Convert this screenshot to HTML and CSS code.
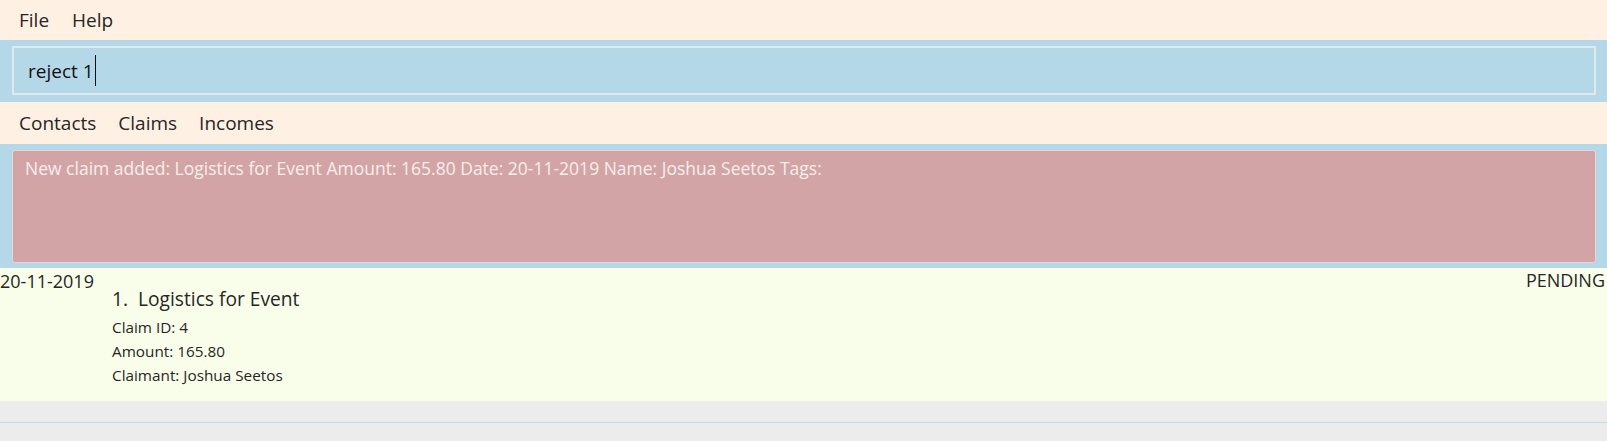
FILE: index.html
```html
<!DOCTYPE html>
<html>
<head>
<meta charset="utf-8">
<link rel="stylesheet" href="styles.css">
</head>
<body>
<div class="app">
  <div class="menubar">
    <span class="menu-item">File</span>
    <span class="menu-item">Help</span>
  </div>
  <div class="command-area">
    <div class="command-field"><span class="command-text">reject 1</span><span class="caret"></span></div>
  </div>
  <div class="tabbar">
    <span class="tab">Contacts</span>
    <span class="tab">Claims</span>
    <span class="tab">Incomes</span>
  </div>
  <div class="result-area">
    <div class="result-box">New claim added: Logistics for Event Amount: 165.80 Date: 20-11-2019 Name: Joshua Seetos Tags:</div>
  </div>
  <div class="list">
    <div class="card">
      <div class="card-date">20-11-2019</div>
      <div class="card-body">
        <div class="card-title">1.&nbsp;&nbsp;Logistics for Event</div>
        <div class="card-line">Claim ID: 4</div>
        <div class="card-line">Amount: 165.80</div>
        <div class="card-line">Claimant: Joshua Seetos</div>
      </div>
      <div class="card-status">PENDING</div>
    </div>
  </div>
  <div class="footer">
    <div class="footer-line"></div>
  </div>
</div>
</body>
</html>
```
FILE: styles.css
```css
html, body {
  margin: 0;
  padding: 0;
}
body {
  width: 1607px;
  height: 441px;
  overflow: hidden;
  background: #ececec;
  font-family: "Open Sans", "Noto Sans", sans-serif;
  color: #262626;
}
.app {
  display: flex;
  flex-direction: column;
}
.menubar {
  height: 40px;
  background: #fef0e3;
  display: flex;
  align-items: center;
  padding-left: 19px;
  gap: 23px;
  font-size: 19px;
  box-sizing: border-box;
}
.menu-item {
  line-height: 40px;
}
.command-area {
  height: 62px;
  background: #b4d8e7;
  padding: 6px 11px 7px 12px;
  box-sizing: border-box;
}
.command-field {
  height: 49px;
  border: 2px solid #dfe9ee;
  box-sizing: border-box;
  display: flex;
  align-items: center;
  padding-left: 14px;
  font-size: 19px;
  color: #111;
}
.caret {
  display: inline-block;
  width: 1.5px;
  height: 31px;
  background: #111;
  margin-left: 1px;
}
.tabbar {
  height: 42px;
  background: #fef0e3;
  display: flex;
  align-items: center;
  padding-left: 19px;
  gap: 22px;
  font-size: 19px;
  box-sizing: border-box;
}
.result-area {
  height: 124px;
  background: #b4d8e7;
  padding: 6px 11px 5px 12px;
  box-sizing: border-box;
}
.result-box {
  height: 113px;
  box-sizing: border-box;
  background: #d3a4a5;
  border: 1px solid #e6d6d7;
  border-radius: 3px;
  color: #f7eeee;
  font-size: 17.5px;
  padding: 6px 12px;
  line-height: 22px;
}
.list {
  height: 133px;
  background: #f8fee9;
}
.card {
  display: flex;
  align-items: flex-start;
}
.card-date {
  width: 112px;
  font-size: 18px;
  line-height: 20px;
  padding-top: 3px;
}
.card-body {
  flex: 1;
  padding-top: 18px;
}
.card-title {
  font-size: 19.2px;
  line-height: 25px;
  margin-bottom: 4px;
}
.card-line {
  font-size: 15.3px;
  line-height: 24px;
}
.card-status {
  font-size: 18px;
  line-height: 20px;
  padding-top: 2px;
  padding-right: 2px;
}
.footer {
  height: 40px;
  padding-top: 21px;
  box-sizing: border-box;
}
.footer-line {
  height: 1px;
  background: #b8dcea;
}
```
